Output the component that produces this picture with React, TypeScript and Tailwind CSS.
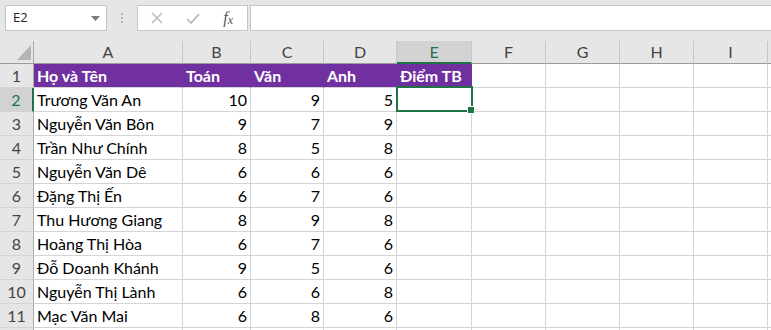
import React from "react";

const colLetters = ["A", "B", "C", "D", "E", "F", "G", "H", "I"];
const colW = ["w-[149px]", "w-[68px]", "w-[73px]", "w-[73px]", "w-[75px]", "w-[74px]", "w-[74px]", "w-[74px]", "w-[74px]"];

const data: [string, number, number, number][] = [
  ["Trương Văn An", 10, 9, 5],
  ["Nguyễn Văn Bôn", 9, 7, 9],
  ["Trần Như Chính", 8, 5, 8],
  ["Nguyễn Văn Dê", 6, 6, 6],
  ["Đặng Thị Ến", 6, 7, 6],
  ["Thu Hương Giang", 8, 9, 8],
  ["Hoàng Thị Hòa", 6, 7, 6],
  ["Đỗ Doanh Khánh", 9, 5, 6],
  ["Nguyễn Thị Lành", 6, 6, 8],
  ["Mạc Văn Mai", 6, 8, 6],
];

const font = { fontFamily: "Lato, 'Noto Sans', sans-serif" };

function RowHeader({ n, selected }: { n?: number; selected?: boolean }) {
  return (
    <div
      className={`w-[34px] h-[24px] shrink-0 box-border border-b border-b-[#d4d4d4] flex items-center justify-center text-[16px] ${
        selected
          ? "bg-[#d2d2d2] text-[#217346] border-r-2 border-r-[#217346]"
          : "bg-[#e6e6e6] text-[#444] border-r border-r-[#ababab]"
      }`}
    >
      {n}
    </div>
  );
}

export default function App() {
  const headers = ["Họ và Tên", "Toán", "Văn", "Anh", "Điểm TB"];
  return (
    <div className="w-[771px] h-[330px] overflow-hidden bg-[#e6e6e6] text-black" style={font}>
      {/* formula bar */}
      <div className="h-[41px] flex items-start pt-[5px] pl-[5px] gap-0">
        <div className="w-[102px] h-[26px] bg-white border border-[#c6c6c6] box-border flex items-center justify-between pl-[7px] pr-[6px] text-[13px] text-[#222]" style={{ fontFamily: "'Open Sans', sans-serif" }}>
          <span>E2</span>
          <svg width="9" height="5" viewBox="0 0 9 5"><path d="M0 0h9L4.5 5z" fill="#7a7a7a" /></svg>
        </div>
        <div className="w-[30px] h-[26px] flex flex-col items-center justify-center gap-[2px]">
          <div className="w-[2px] h-[2px] bg-[#b4b4b4]" />
          <div className="w-[2px] h-[2px] bg-[#b4b4b4]" />
          <div className="w-[2px] h-[2px] bg-[#b4b4b4]" />
        </div>
        <div className="w-[111px] h-[26px] bg-white border border-[#c6c6c6] box-border flex items-center">
          <div className="w-[38px] flex justify-center">
            <svg width="12" height="12" viewBox="0 0 12 12"><path d="M1 1l10 10M11 1L1 11" stroke="#b4b4b4" strokeWidth="1.3" /></svg>
          </div>
          <div className="w-[34px] flex justify-center">
            <svg width="14" height="11" viewBox="0 0 14 11"><path d="M1 6l4 4 8-9" stroke="#b4b4b4" strokeWidth="1.6" fill="none" /></svg>
          </div>
          <div className="w-[38px] flex justify-center text-[16px] italic text-[#555]" style={{ fontFamily: "'Liberation Serif', serif" }}>
            <span>f</span><span className="text-[12px] self-end mb-[1px]">x</span>
          </div>
        </div>
        <div className="ml-[2px] flex-1 h-[26px] bg-white border border-[#c6c6c6] border-r-0 box-border" />
      </div>

      {/* column headers */}
      <div className="flex h-[23px]">
        <div className="w-[34px] shrink-0 box-border border-r border-r-[#ababab] border-b border-b-[#9b9b9b] relative">
          <svg className="absolute left-[17px] top-[4px]" width="14" height="15" viewBox="0 0 14 15"><path d="M14 0V15H0z" fill="#b4b4b4" /></svg>
        </div>
        {colLetters.map((c, i) => (
          <div
            key={c}
            className={`${colW[i]} shrink-0 box-border border-r border-r-[#c6c6c6] flex items-center justify-center text-[16px] ${
              c === "E" ? "bg-[#d2d2d2] text-[#217346] border-b-2 border-b-[#217346]" : "text-[#444] border-b border-b-[#9b9b9b]"
            }`}
          >
            {c}
          </div>
        ))}
        <div className="flex-1 box-border border-b border-b-[#9b9b9b]" />
      </div>

      {/* row 1 */}
      <div className="flex h-[24px]">
        <RowHeader n={1} />
        {headers.map((h, i) => (
          <div
            key={h}
            className={`${colW[i]} shrink-0 box-border bg-[#7030a0] border-b border-b-[#d4d4d4] border-r border-r-[#7030a0] flex items-end pb-[1px] pl-[3px] text-white font-bold text-[16px] leading-[20px]`}
          >
            {h}
          </div>
        ))}
        {colLetters.slice(5).map((c, i) => (
          <div key={c} className={`${colW[i + 5]} shrink-0 box-border bg-white border-b border-r border-[#d4d4d4]`} />
        ))}
        <div className="flex-1 bg-white border-b border-[#d4d4d4]" />
      </div>

      {data.map((r, ri) => (
        <div key={ri} className="flex h-[24px]">
          <RowHeader n={ri + 2} selected={ri === 0} />
          <div className={`${colW[0]} shrink-0 box-border bg-white border-b border-r border-[#d4d4d4] flex items-end pb-[1px] pl-[3px] text-[16px] leading-[20px]`}>
            {r[0]}
          </div>
          {[r[1], r[2], r[3]].map((v, vi) => (
            <div key={vi} className={`${colW[vi + 1]} shrink-0 box-border bg-white border-b border-r border-[#d4d4d4] flex items-end justify-end pb-[1px] pr-[3px] text-[16px] leading-[20px]`}>
              {v}
            </div>
          ))}
          <div className={`${colW[4]} shrink-0 box-border bg-white border-b border-r border-[#d4d4d4] relative`}>
            {ri === 0 && (
              <>
                <div className="absolute top-[-2px] left-[-1px] right-[-2px] bottom-[-1px] border-2 border-[#217346] z-10" />
                <div className="absolute right-[-4px] bottom-[-3px] w-[6px] h-[6px] bg-[#217346] border border-white z-20 box-content" />
              </>
            )}
          </div>
          {colLetters.slice(5).map((c, i) => (
            <div key={c} className={`${colW[i + 5]} shrink-0 box-border bg-white border-b border-r border-[#d4d4d4]`} />
          ))}
          <div className="flex-1 bg-white border-b border-[#d4d4d4]" />
        </div>
      ))}
      <div className="flex h-[24px]">
        <RowHeader />
        {colLetters.map((c, i) => (
          <div key={c} className={`${colW[i]} shrink-0 box-border bg-white border-r border-[#d4d4d4]`} />
        ))}
        <div className="flex-1 bg-white" />
      </div>
    </div>
  );
}
